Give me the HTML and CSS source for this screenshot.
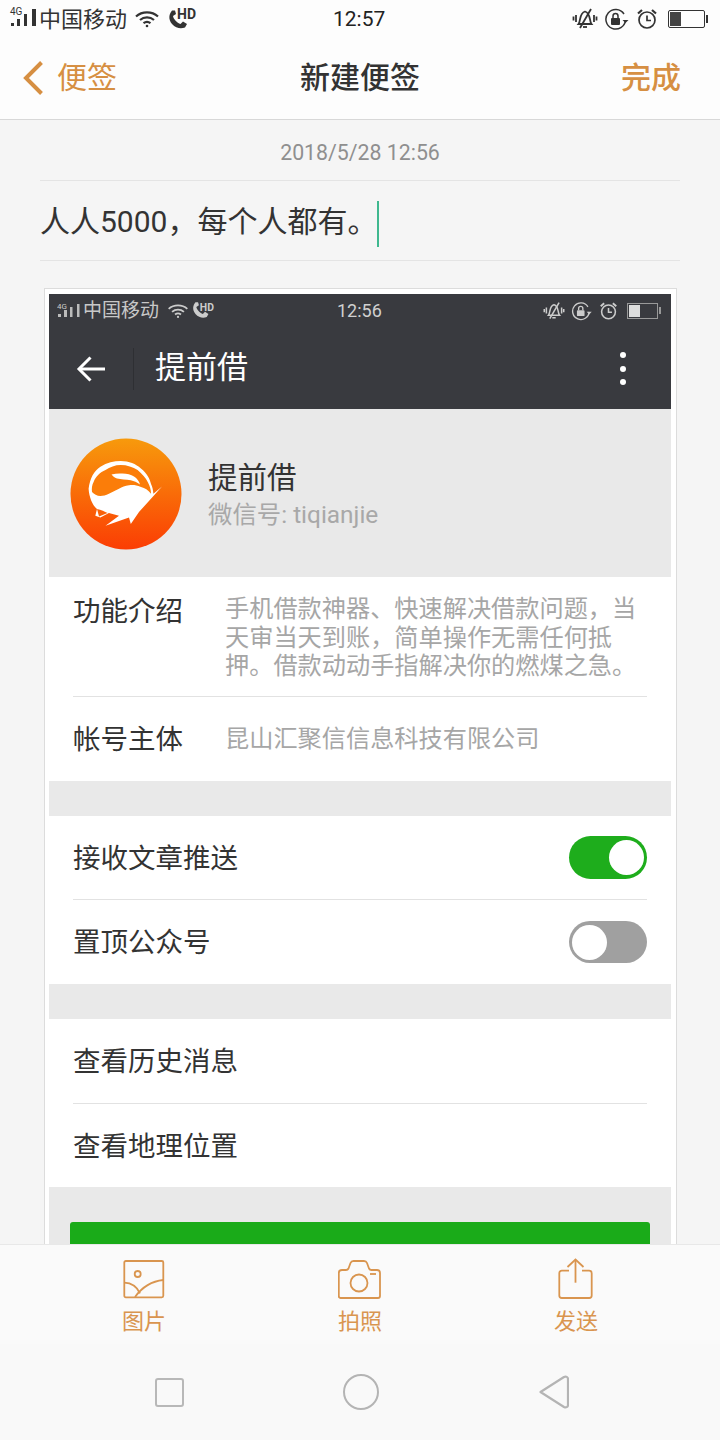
FILE: index.html
```html
<!DOCTYPE html>
<html lang="zh">
<head>
<meta charset="utf-8">
<title>新建便签</title>
<link rel="stylesheet" href="styles.css">
</head>
<body>
<div class="page">
  <div class="status">
    <div class="status-left">
      <svg class="sig" width="32" height="28" viewBox="0 -2 32 28"><text x="1" y="7" class="sig-t">4G</text><rect x="2" y="15" width="3" height="3"/><rect x="8" y="11" width="3" height="7"/><rect x="15" y="6" width="3" height="12"/><rect x="23" y="1" width="4" height="17"/></svg>
      <span class="carrier">中国移动</span>
      <svg class="wifi" width="26" height="20" viewBox="0 0 26 20" fill="none" stroke="#333" stroke-width="2.2"><path d="M2 7.500C8 2 18 2 24 7.500"/><path d="M6 11C10 7.500 16 7.500 20 11"/><path d="M9.500 14.200C11.500 12.600 14.500 12.600 16.500 14.200"/><circle cx="13" cy="17" r="1.300" fill="#333" stroke="none"/></svg>
      <svg class="call" width="30" height="26" viewBox="0 -2 30 26"><path d="M4 1.500C1 5 0 10 4 15 8 19.500 13 20 17 18.500L19 15 15 12.500 12.500 15C9 14 5.500 10 5 7L8 5 7 1.500z" fill="#333"/><text x="9" y="10" class="hd">HD</text></svg>
    </div>
    <span class="clock">12:57</span>
    <div class="status-right">
      <svg width="26" height="22" viewBox="0 0 26 22" fill="none" stroke="#333" stroke-width="1.800"><path d="M6.500 16C9 13 7 5 13 3.500c6 1.500 4 9.500 6.500 12.500z"/><path d="M11 19h4"/><path d="M19 1 8 20"/><path d="M4 7v7M1.500 8.500v4M22 7v7M24.500 8.500v4"/></svg>
      <svg width="26" height="22" viewBox="0 0 26 22" fill="none" stroke="#333" stroke-width="1.500"><path d="M21.500 12A9.800 9.800 0 1 1 20 6"/><path d="M18.500 12h6l-3 3z" fill="#333" stroke="none"/><rect x="7" y="10" width="9" height="7" rx="1" fill="#333" stroke="none"/><path d="M9 10V8a2.500 2.500 0 0 1 5 0v2"/></svg>
      <svg width="22" height="22" viewBox="0 0 22 22" fill="none" stroke="#333" stroke-width="1.700"><circle cx="11" cy="12" r="8"/><path d="M11 7.500V12.500H15"/><path d="M2 5.500 6 2M20 5.500 16 2" stroke-width="2.200"/></svg>
      <div class="batt"><div class="batt-fill"></div></div>
    </div>
  </div>

  <header class="nav">
    <div class="nav-back">
      <svg width="22" height="36" viewBox="0 0 22 36" fill="none" stroke="#d68f42" stroke-width="4"><path d="M19.500 2.500 4 18 19.500 33.500"/></svg>
      <span>便签</span>
    </div>
    <h1 class="nav-title">新建便签</h1>
    <span class="nav-done">完成</span>
  </header>

  <main class="content">
    <div class="date">2018/5/28 12:56</div>
    <div class="note"><span>人人5000，每个人都有。</span><i class="caret"></i></div>
    <div class="shot">
      <div class="shot-status">
        <div class="shot-left">
          <svg width="26" height="18" viewBox="0 0 26 18" fill="#bbb"><rect x="1" y="12" width="3" height="3"/><rect x="7" y="8" width="3" height="7"/><rect x="13" y="5" width="2.500" height="10"/><rect x="20" y="2" width="2.500" height="13"/><text x="0" y="7" class="sig-s">4G</text></svg>
          <span class="shot-carrier">中国移动</span>
          <svg width="22" height="18" viewBox="0 0 26 20" fill="none" stroke="#ccc" stroke-width="2.200"><path d="M2 7.500C8 2 18 2 24 7.500"/><path d="M6 11C10 7.500 16 7.500 20 11"/><path d="M9.500 14.200C11.500 12.600 14.500 12.600 16.500 14.200"/><circle cx="13" cy="17" r="1.300" fill="#ccc" stroke="none"/></svg>
          <svg width="26" height="20" viewBox="0 0 30 23"><path d="M4 1.500C1 5 0 10 4 15 8 19.500 13 20 17 18.500L19 15 15 12.500 12.500 15C9 14 5.500 10 5 7L8 5 7 1.500z" fill="#ccc"/><text x="9" y="12" class="hd-s">HD</text></svg>
        </div>
        <span class="shot-clock">12:56</span>
        <div class="shot-right">
          <svg width="22" height="20" viewBox="0 0 26 22" fill="none" stroke="#ccc" stroke-width="1.800"><path d="M6.500 16C9 13 7 5 13 3.500c6 1.500 4 9.500 6.500 12.500z"/><path d="M11 19h4"/><path d="M19 1 8 20"/><path d="M4 7v7M1.500 8.500v4M22 7v7M24.500 8.500v4"/></svg>
          <svg width="22" height="20" viewBox="0 0 26 22" fill="none" stroke="#ccc" stroke-width="1.600"><path d="M21.500 12A9.800 9.800 0 1 1 20 6"/><path d="M18.500 12h6l-3 3z" fill="#ccc" stroke="none"/><rect x="7" y="10" width="9" height="7" rx="1" fill="#ccc" stroke="none"/><path d="M9 10V8a2.500 2.500 0 0 1 5 0v2"/></svg>
          <svg width="19" height="20" viewBox="0 0 22 22" fill="none" stroke="#ccc" stroke-width="1.800"><circle cx="11" cy="12" r="8"/><path d="M11 7.500V12.500H15"/><path d="M2 5.500 6 2M20 5.500 16 2" stroke-width="2.200"/></svg>
          <div class="shot-batt"><div class="shot-batt-fill"></div></div>
        </div>
      </div>
      <div class="shot-bar">
        <svg class="arrow" width="30" height="28" viewBox="0 0 30 28" fill="none" stroke="#fff" stroke-width="3"><path d="M29 14H3"/><path d="M14.500 2.500 3 14 14.500 25.500"/></svg>
        <i class="bar-sep"></i>
        <span class="bar-title">提前借</span>
        <div class="dots"><i></i><i></i><i></i></div>
      </div>
      <div class="shot-body">
        <div class="profile">
          <svg class="logo" width="112" height="112" viewBox="0 0 112 112">
            <defs><linearGradient id="lg" x1="0" y1="0" x2="0" y2="1"><stop offset="0" stop-color="#f79a0c"/><stop offset="1" stop-color="#fb3d04"/></linearGradient></defs>
            <circle cx="56" cy="56" r="55.500" fill="url(#lg)"/>
            <path d="M18.600 50.700C20 40 24 33 30.400 28.700 37 24.500 44 23 50.700 23 59 23 66 26 70.900 30.400 77 35 80 41 81 46 82.500 49 83 52 83.400 55.700L92 48.600 79.400 62.500 69 74 60.800 86 59 79.400 35.500 87.800 49 77.700 38.900 75 30.400 79.400 25.300 77.700 27 71C22 67 19 58 18.600 50.700z" fill="#fff"/>
            <path d="M22 54C21.500 50 22 47 23.600 44 26 38 30 34.500 35.500 32 40 29 45 27 50.700 27 57 27 63 29 67.600 32 72 36 76 40 77.700 44 80 48 81 52 81 55.700 78 52 75 50 71 49 66 47 63 46.800 59 47.300 55 47.800 52 49 49 50.700L38.900 55.700C36 57 33 58 30.400 58 27 58 24 56 22 54z" fill="#fb7d09"/>
            <path d="M41.500 36.500C45 35.500 48.500 35.300 52.400 35.500 57 35.800 61 36.500 64 38.500 67 40.500 69 43 70 46.600 67 44 64 43 60.800 42.200 56 41.500 51 41.500 47 40.500 44.500 39.500 42.500 38 41.500 36.500z" fill="#fff"/>
            <path d="M27 71C31 72 35 73.500 37.500 75L29 78.500z" fill="#f9620a"/>
          </svg>
          <div class="profile-text">
            <div class="profile-name">提前借</div>
            <div class="profile-id">微信号: tiqianjie</div>
          </div>
        </div>
        <section class="group">
          <div class="row row-intro">
            <span class="label">功能介绍</span>
            <p class="intro">手机借款神器、快速解决借款问题，当天审当天到账，简单操作无需任何抵押。借款动动手指解决你的燃煤之急。</p>
          </div>
          <div class="row row-owner">
            <span class="label">帐号主体</span>
            <span class="owner">昆山汇聚信信息科技有限公司</span>
          </div>
        </section>
        <section class="group">
          <div class="row row-on">
            <span class="label">接收文章推送</span>
            <span class="toggle on"><i></i></span>
          </div>
          <div class="row row-off">
            <span class="label">置顶公众号</span>
            <span class="toggle"><i></i></span>
          </div>
        </section>
        <section class="group">
          <div class="row row-link"><span class="label">查看历史消息</span></div>
          <div class="row row-link"><span class="label">查看地理位置</span></div>
        </section>
        <div class="shot-foot"><div class="cta"></div></div>
      </div>
    </div>
  </main>

  <footer class="tools">
    <div class="tool">
      <svg width="42" height="44" viewBox="0 0 42 44" fill="none" stroke="#d9954f" stroke-width="1.800"><rect x="1.300" y="3" width="39" height="36.300" rx="1.500"/><circle cx="14.700" cy="16" r="3"/><path d="M1.300 24.700C9 25 14 29 17 35.300"/><path d="M40.300 22C30 23 20 28 12 39"/></svg>
      <span>图片</span>
    </div>
    <div class="tool">
      <svg width="44" height="44" viewBox="0 0 44 44" fill="none" stroke="#d9954f" stroke-width="1.800"><path d="M2.500 40C1 40 .8 39 .8 38V15C.8 13 2 12 4 12H8C9.500 12 10 11.500 10.500 10.500L12.500 5C13 3.800 14 3 15.500 3H26C27.500 3 28.500 3.800 29 5L31 10.500C31.500 11.500 32 12 33.500 12H39C41 12 42 13 42 15V38C42 39 41.500 40 40 40z"/><circle cx="21" cy="25" r="8.500"/><path d="M32 16h6"/></svg>
      <span>拍照</span>
    </div>
    <div class="tool">
      <svg width="36" height="44" viewBox="0 0 36 44" fill="none" stroke="#d9954f" stroke-width="1.800"><path d="M11 12.700H3.800C2.300 12.700 1.300 13.700 1.300 15.200V37.500C1.300 39 2.300 40 3.800 40H31.200C32.700 40 33.700 39 33.700 37.500V15.200C33.700 13.700 32.700 12.700 31.200 12.700H24"/><path d="M17.500 24.700V2"/><path d="M9.500 9 17.500 1.500 25.500 9"/></svg>
      <span>发送</span>
    </div>
  </footer>

  <nav class="softkeys">
    <i class="key-square"></i>
    <i class="key-circle"></i>
    <svg width="32" height="36" viewBox="0 0 32 36" fill="none" stroke="#b4b4b4" stroke-width="2.200" stroke-linejoin="round"><path d="M3.500 18 27 3C29 2 31 3 31 5V31C31 33 29 34 27 33z"/></svg>
  </nav>
</div>
</body>
</html>
```
FILE: styles.css
```css
* { box-sizing: border-box; }
html, body { margin: 0; padding: 0; }
body {
  font-family: "Roboto", "Noto Sans CJK SC", sans-serif;
  background: #f5f5f5;
}
i { display: block; font-style: normal; }
p, h1 { margin: 0; }
.page {
  width: 720px;
  height: 1440px;
  display: flex;
  flex-direction: column;
  overflow: hidden;
}
.status {
  height: 40px;
  flex: none;
  background: #fdfdfd;
  display: flex;
  align-items: center;
  justify-content: space-between;
  padding: 0 15px 0 9px;
  position: relative;
}
.status-left { display: flex; align-items: center; color: #333; }
.sig { fill: #333; margin-right: -2px; }
.sig-t { font: 10px "Roboto", sans-serif; fill: #333; }
.hd { font: 700 14px "Roboto", sans-serif; fill: #333; }
.sig-s { font: 8px "Roboto", sans-serif; fill: #ccc; }
.hd-s { font: 700 12px "Roboto", sans-serif; fill: #ccc; }
.carrier { font-size: 22px; line-height: 38px; margin-right: 7px; }
.wifi { margin-bottom: 3px; }
.call { margin-left: 8px; }
.clock {
  position: absolute;
  left: 333px;
  top: 0;
  font-size: 21px;
  line-height: 39px;
  color: #222;
}
.status-right { display: flex; align-items: center; gap: 6px; padding-bottom: 3px; }
.batt {
  width: 37px;
  height: 18px;
  border: 1px solid #333;
  border-radius: 2px;
  padding: 1px;
  margin-left: 4px;
  position: relative;
}
.batt::after {
  content: "";
  position: absolute;
  right: -4px;
  top: 4px;
  width: 2px;
  height: 8px;
  background: #333;
}
.batt-fill { width: 11px; height: 100%; background: #444; }
.nav {
  height: 80px;
  flex: none;
  background: #fdfdfd;
  border-bottom: 1px solid #d8d8d8;
  display: flex;
  align-items: center;
  justify-content: space-between;
  padding: 0 39px 3px 22px;
  position: relative;
}
.nav-back {
  display: flex;
  align-items: center;
  gap: 13px;
  color: #d68f42;
  font-size: 30px;
  line-height: 38px;
}
.nav-title {
  position: absolute;
  left: 0;
  right: 0;
  top: 19px;
  text-align: center;
  font-size: 30px;
  line-height: 38px;
  font-weight: 500;
  color: #333;
}
.nav-done { color: #d68f42; font-size: 30px; line-height: 38px; font-weight: 500; margin-bottom: 1px; }
.content {
  flex: 1;
  min-height: 0;
  overflow: hidden;
  padding: 0 40px;
  background: #f5f5f5;
}
.date {
  height: 61px;
  padding-top: 18px;
  text-align: center;
  font-size: 21.300px;
  line-height: 30px;
  color: #8f8f8f;
  border-bottom: 1px solid #e4e4e4;
}
.note {
  height: 80px;
  display: flex;
  align-items: center;
  padding-bottom: 3px;
  font-size: 30px;
  color: #333;
  border-bottom: 1px solid #e4e4e4;
}
.caret { width: 2px; height: 46px; background: #3fb88f; margin: 9px 0 0 0; }
.shot {
  margin: 27px 3px 0 4px;
  background: #fff;
  border: 1px solid #dcdcdc;
  padding: 5px 5px 0 4px;
  width: 633px;
}
.shot-status {
  height: 34px;
  background: #393a3f;
  display: flex;
  align-items: center;
  justify-content: space-between;
  padding: 0 13px 0 8px;
  position: relative;
}
.shot-left { display: flex; align-items: center; gap: 3px; }
.shot-carrier { font-size: 19px; line-height: 30px; color: #c8c8c8; margin: 0 5px 0 -3px; }
.shot-clock {
  position: absolute;
  left: 288px;
  top: 0;
  font-size: 18px;
  line-height: 34px;
  color: #d0d0d0;
}
.shot-right { display: flex; align-items: center; gap: 6px; }
.shot-batt {
  width: 31px;
  height: 16px;
  border: 1px solid #999;
  padding: 1px;
  margin-left: 3px;
  position: relative;
}
.shot-batt::after {
  content: "";
  position: absolute;
  right: -4px;
  top: 3px;
  width: 2px;
  height: 7px;
  background: #999;
}
.shot-batt-fill { width: 11px; height: 100%; background: #ddd; }
.shot-bar {
  height: 81px;
  background: #393a3f;
  display: flex;
  align-items: center;
  padding: 0 45px 0 27px;
}
.bar-sep { width: 1px; height: 42px; background: #2e2f33; margin: 0 21px 0 27px; }
.bar-title { flex: 1; font-size: 31px; line-height: 40px; color: #fff; padding-bottom: 2px; }
.dots { display: flex; flex-direction: column; gap: 7.500px; }
.dots i { width: 6px; height: 6px; border-radius: 50%; background: #fff; }
.shot-body { background: #e9e9e9; }
.profile {
  height: 168px;
  background: #e9e9e9;
  display: flex;
  align-items: center;
  padding: 0 0 0 21px;
  gap: 26px;
}
.logo { flex: none; margin-top: 1px; }
.profile-text { padding-top: 4px; }
.profile-name { font-size: 29.500px; line-height: 36px; color: #333; }
.profile-id { font-size: 24.400px; line-height: 32px; margin-top: 3px; color: #a8a8a8; }
.group { background: #fff; padding: 0 24px; }
.group + .group { margin-top: 35px; }
.row { display: flex; align-items: center; justify-content: space-between; }
.row + .row { border-top: 1px solid #e2e2e2; }
.label { font-size: 27.500px; line-height: 38px; color: #333; white-space: nowrap; }
.row-intro { height: 119px; align-items: flex-start; padding-top: 16px; }
.row-owner .label, .row-on .label, .row-off .label, .row-link .label { margin-top: 2px; }
.row-owner { height: 85px; }
.intro {
  width: 422px;
  font-size: 24.200px;
  line-height: 28.500px;
  color: #a6a6a6;
  margin-top: 2px;
}
.owner { width: 422px; font-size: 24.200px; line-height: 34px; color: #a6a6a6; margin-bottom: 1px; }
.row-on { height: 83px; }
.row-off { height: 85px; }
.row-link { height: 84px; }
.toggle {
  width: 78px;
  height: 42.500px;
  border-radius: 22px;
  background: #a0a0a0;
  padding: 3px;
  display: flex;
}
.toggle i { width: 35px; height: 35px; margin-top: 1px; border-radius: 50%; background: #fff; }
.toggle.on { background: #1ead1c; justify-content: flex-end; }
.shot-foot { background: #e9e9e9; padding: 35px 21px 0; height: 120px; }
.cta { height: 60px; background: #1aab19; border-radius: 3px; }
.tools {
  height: 100px;
  flex: none;
  background: #fafafa;
  border-top: 1px solid #e8e8e8;
  display: flex;
  padding: 13px 101px 0;
  justify-content: space-between;
  position: relative;
  z-index: 1;
}
.tool {
  width: 86px;
  display: flex;
  flex-direction: column;
  align-items: center;
  color: #d9954f;
  font-size: 22px;
  line-height: 30px;
  gap: 5px;
}
.softkeys {
  height: 96px;
  flex: none;
  background: #f9f9f9;
  display: flex;
  align-items: center;
  justify-content: space-between;
  padding: 0 151px 0 155px;
}
.key-square { width: 29px; height: 29px; border: 2.500px solid #b8b8b8; border-radius: 3px; }
.key-circle { width: 36px; height: 36px; border: 2.500px solid #b4b4b4; border-radius: 50%; }
```
